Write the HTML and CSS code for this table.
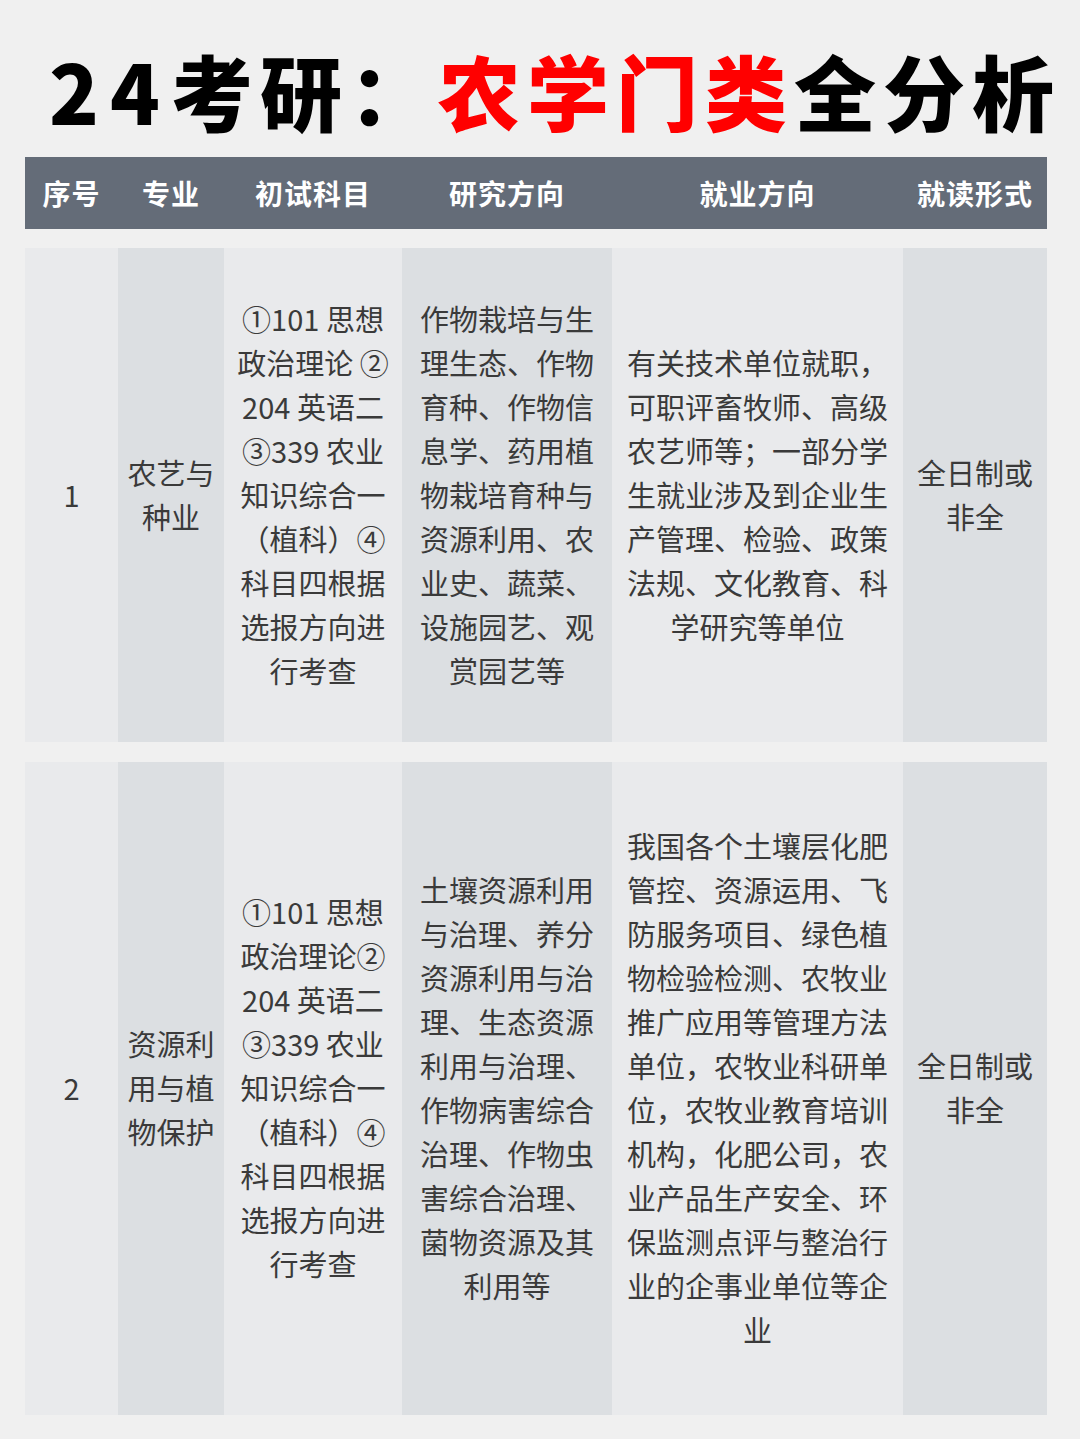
FILE: index.html
```html
<!DOCTYPE html>
<html lang="zh-CN">
<head>
<meta charset="utf-8">
<title>24考研：农学门类全分析</title>
<link rel="stylesheet" href="styles.css">
</head>
<body>
<div class="page">
  <h1 class="title"><span class="num">24</span>考研：<span class="red">农学门类</span>全分析</h1>
  <div class="table">
    <div class="head">
      <div class="hc">序号</div>
      <div class="hc">专业</div>
      <div class="hc">初试科目</div>
      <div class="hc">研究方向</div>
      <div class="hc">就业方向</div>
      <div class="hc">就读形式</div>
    </div>
    <div class="row row1">
      <div class="c light">1</div>
      <div class="c dark">农艺与<br>种业</div>
      <div class="c light">①101 思想<br>政治理论 ②<br>204 英语二<br>③339 农业<br>知识综合一<br>（植科）④<br>科目四根据<br>选报方向进<br>行考查</div>
      <div class="c dark">作物栽培与生<br>理生态、作物<br>育种、作物信<br>息学、药用植<br>物栽培育种与<br>资源利用、农<br>业史、蔬菜、<br>设施园艺、观<br>赏园艺等</div>
      <div class="c light">有关技术单位就职，<br>可职评畜牧师、高级<br>农艺师等；一部分学<br>生就业涉及到企业生<br>产管理、检验、政策<br>法规、文化教育、科<br>学研究等单位</div>
      <div class="c dark">全日制或<br>非全</div>
    </div>
    <div class="row row2">
      <div class="c light">2</div>
      <div class="c dark">资源利<br>用与植<br>物保护</div>
      <div class="c light">①101 思想<br>政治理论②<br>204 英语二<br>③339 农业<br>知识综合一<br>（植科）④<br>科目四根据<br>选报方向进<br>行考查</div>
      <div class="c dark">土壤资源利用<br>与治理、养分<br>资源利用与治<br>理、生态资源<br>利用与治理、<br>作物病害综合<br>治理、作物虫<br>害综合治理、<br>菌物资源及其<br>利用等</div>
      <div class="c light">我国各个土壤层化肥<br>管控、资源运用、飞<br>防服务项目、绿色植<br>物检验检测、农牧业<br>推广应用等管理方法<br>单位，农牧业科研单<br>位，农牧业教育培训<br>机构，化肥公司，农<br>业产品生产安全、环<br>保监测点评与整治行<br>业的企事业单位等企<br>业</div>
      <div class="c dark">全日制或<br>非全</div>
    </div>
  </div>
</div>
</body>
</html>
```

FILE: styles.css
```css
html, body {
  margin: 0;
  padding: 0;
  background: #f0f0f0;
}
body {
  width: 1080px;
  height: 1439px;
  overflow: hidden;
  font-family: "Noto Sans CJK SC", "Noto Sans", sans-serif;
}
.page {
  padding: 0 33px 0 25px;
}
.title {
  margin: 0;
  height: 157px;
  display: flex;
  align-items: center;
  padding-left: 24px;
  padding-top: 22px;
  font-size: 82px;
  font-weight: 900;
  letter-spacing: 7px;
  color: #000;
  white-space: nowrap;
  line-height: 1;
  box-sizing: border-box;
}
.title .num {
  letter-spacing: 11px;
}
.title .red {
  color: #ff0000;
}
.table {
  display: flex;
  flex-direction: column;
}
.head, .row {
  display: grid;
  grid-template-columns: 93px 106px 178px 210px 291px 144px;
}
.head {
  height: 72px;
  background: #646c78;
  margin-bottom: 19px;
}
.hc {
  display: flex;
  align-items: center;
  justify-content: center;
  color: #ffffff;
  font-size: 28px;
  font-weight: 700;
  letter-spacing: 1px;
}
.row1 {
  height: 494px;
  margin-bottom: 20px;
}
.row2 {
  height: 653px;
}
.c {
  display: flex;
  align-items: center;
  justify-content: center;
  text-align: center;
  font-size: 29px;
  line-height: 44px;
  color: #3a3a3a;
  white-space: nowrap;
  padding-bottom: 3px;
  box-sizing: border-box;
}
.light {
  background: #e9eaec;
}
.dark {
  background: #dcdfe2;
}
```
